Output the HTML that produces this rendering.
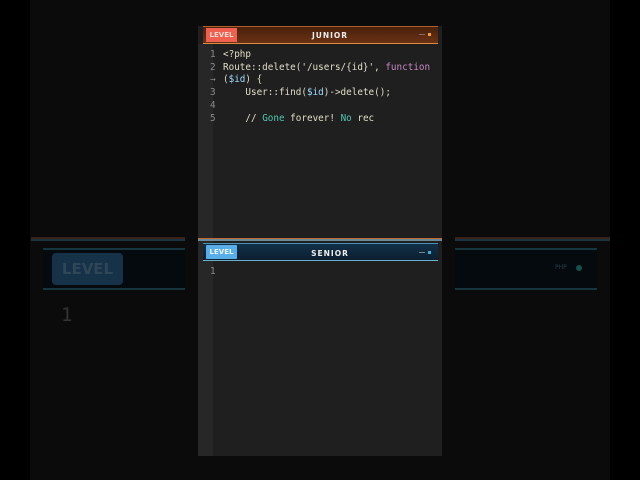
<!DOCTYPE html>
<html><head><meta charset="utf-8"><style>
*{margin:0;padding:0;box-sizing:border-box}
body{width:640px;height:480px;background:#000;position:relative;overflow:hidden;font-family:"DejaVu Sans Mono","Liberation Mono",monospace}
.bgc{position:absolute;left:30px;top:0;width:580px;height:480px;background:#0b0b0b}
.side{position:absolute;background:#050a0e}
.code{position:absolute;font-size:9.3px;color:#e0dcc8;white-space:pre;line-height:12.7px}
.ln{position:absolute;font-size:9.3px;color:#8a8a8a;line-height:12.7px;white-space:pre}
.hdr{position:absolute;font-family:"DejaVu Sans","Liberation Sans",sans-serif;font-weight:bold}
</style></head><body>
<div class="bgc"></div>
<div style="position:absolute;left:31px;top:237px;width:154px;height:2px;background:#3a2218"></div>
<div style="position:absolute;left:31px;top:239px;width:154px;height:2px;background:#1c3440"></div>
<div class="side" style="left:43px;top:248px;width:142px;height:42px;border-top:2px solid #15353f;border-bottom:2px solid #15353f"></div>
<div style="position:absolute;left:52px;top:253px;width:71px;height:32px;background:#163248;border-radius:4px;color:#2f4656;font:bold 15px 'DejaVu Sans',sans-serif;text-align:center;line-height:32px">LEVEL</div>
<div style="position:absolute;left:61px;top:304px;color:#333;font:19px 'DejaVu Sans Mono',monospace">1</div>
<div style="position:absolute;left:455px;top:237px;width:155px;height:2px;background:#3a2218"></div>
<div style="position:absolute;left:455px;top:239px;width:155px;height:2px;background:#1c3440"></div>
<div class="side" style="left:455px;top:248px;width:142px;height:42px;border-top:2px solid #15353f;border-bottom:2px solid #15353f"></div>
<div style="position:absolute;left:555px;top:264px;color:#2c3e48;font:6px 'DejaVu Sans',sans-serif">PHP</div>
<div style="position:absolute;left:576px;top:265px;width:6px;height:6px;border-radius:50%;background:#17514f"></div>
<div style="position:absolute;left:198px;top:26px;width:244px;height:430px;background:#1f1f1f"></div>
<div style="position:absolute;left:198px;top:44px;width:15px;height:412px;background:#272727"></div>
<div style="position:absolute;left:203px;top:26px;width:235px;height:18px;background:linear-gradient(#4a200c,#6a3214);border-top:1px solid #b0602a;border-bottom:1px solid #e08a40"></div>
<div class="hdr" style="left:206px;top:28px;width:31px;height:14px;background:#f06050;color:#ffd8d0;font-size:7px;line-height:14px;text-align:center">LEVEL</div>
<div class="hdr" style="left:290px;top:31px;width:80px;text-align:center;color:#eee;font-size:7.5px;letter-spacing:1px">JUNIOR</div>
<div style="position:absolute;left:419px;top:34px;width:6px;height:1px;background:#8a6a5a"></div>
<div style="position:absolute;left:428px;top:33px;width:3px;height:3px;background:#f0a030"></div>
<div class="ln" style="left:210px;top:49px">1
2
→
3
4
5</div>
<div class="code" style="left:223px;top:49px">&lt;?php
Route::delete('/users/{id}', <span style="color:#c586c0">function</span>
(<span style="color:#9cdcfe">$id</span>) {
    User::find(<span style="color:#9cdcfe">$id</span>)-&gt;delete();

    // <span style="color:#4ec9b0">Gone</span> forever! <span style="color:#4ec9b0">No</span> rec</div>
<div style="position:absolute;left:198px;top:238px;width:244px;height:1px;background:#c06a30"></div>
<div style="position:absolute;left:198px;top:239px;width:244px;height:2px;background:#6a8a9a"></div>
<div style="position:absolute;left:203px;top:243px;width:235px;height:18px;background:linear-gradient(#123048,#0c2030);border-top:1px solid #4a90b0;border-bottom:1px solid #6ab0d0"></div>
<div class="hdr" style="left:206px;top:245px;width:31px;height:14px;background:#5aaee8;color:#e8f6ff;font-size:7px;line-height:14px;text-align:center;border-radius:1px">LEVEL</div>
<div class="hdr" style="left:290px;top:249px;width:80px;text-align:center;color:#eee;font-size:7.5px;letter-spacing:1px">SENIOR</div>
<div style="position:absolute;left:419px;top:252px;width:6px;height:1px;background:#6a8a9a"></div>
<div style="position:absolute;left:428px;top:251px;width:3px;height:3px;background:#40b0d0"></div>
<div class="ln" style="left:210px;top:266px">1</div>
</body></html>
